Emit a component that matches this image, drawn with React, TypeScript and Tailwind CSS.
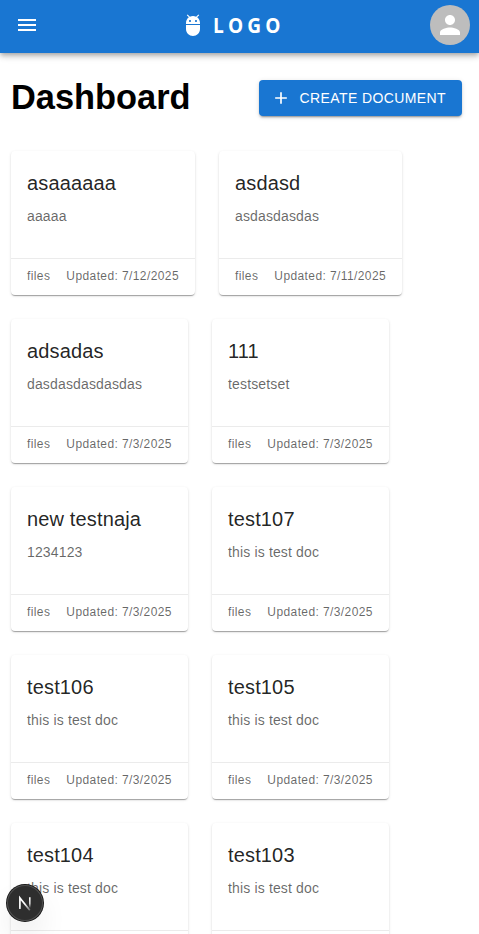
type Doc = { title: string; text: string; date?: string };

const rows: Doc[][] = [
  [
    { title: "asaaaaaa", text: "aaaaa", date: "7/12/2025" },
    { title: "asdasd", text: "asdasdasdas", date: "7/11/2025" },
  ],
  [
    { title: "adsadas", text: "dasdasdasdasdas", date: "7/3/2025" },
    { title: "111", text: "testsetset", date: "7/3/2025" },
  ],
  [
    { title: "new testnaja", text: "1234123", date: "7/3/2025" },
    { title: "test107", text: "this is test doc", date: "7/3/2025" },
  ],
  [
    { title: "test106", text: "this is test doc", date: "7/3/2025" },
    { title: "test105", text: "this is test doc", date: "7/3/2025" },
  ],
  [
    { title: "test104", text: "this is test doc" },
    { title: "test103", text: "this is test doc" },
  ],
];

function Icon({ d, className }: { d: string; className: string }) {
  return (
    <svg viewBox="0 0 24 24" fill="currentColor" className={className}>
      <path d={d} />
    </svg>
  );
}

const menuPath = "M3 18h18v-2H3v2zm0-5h18v-2H3v2zm0-7v2h18V6H3z";
const adbPath =
  "M5 16c0 3.87 3.13 7 7 7s7-3.13 7-7v-4H5v4zM16.12 4.37l2.1-2.1-.82-.83-2.3 2.31C14.16 3.28 13.12 3 12 3s-2.16.28-3.09.75L6.6 1.44l-.82.83 2.1 2.1C6.14 5.64 5 7.68 5 10v1h14v-1c0-2.32-1.14-4.36-2.88-5.63zM9 9c-.55 0-1-.45-1-1s.45-1 1-1 1 .45 1 1-.45 1-1 1zm6 0c-.55 0-1-.45-1-1s.45-1 1-1 1 .45 1 1-.45 1-1 1z";
const personPath =
  "M12 12c2.21 0 4-1.79 4-4s-1.79-4-4-4-4 1.79-4 4 1.79 4 4 4zm0 2c-2.67 0-8 1.34-8 4v2h16v-2c0-2.66-5.33-4-8-4z";
const addPath = "M19 13h-6v6h-2v-6H5v-2h6V5h2v6h6v2z";

function DocCard({ doc }: { doc: Doc }) {
  return (
    <article className="h-36 min-w-[177px] shrink-0 rounded bg-white shadow-[0_2px_1px_-1px_rgba(0,0,0,0.2),0_1px_1px_0_rgba(0,0,0,0.14),0_1px_3px_0_rgba(0,0,0,0.12)]">
      <div className="h-[107px] px-4 pt-4">
        <h2 className="mb-[7px] text-xl leading-8 tracking-[0.0075em] text-black/87">{doc.title}</h2>
        <p className="text-sm leading-5 tracking-[0.01071em] text-black/60">{doc.text}</p>
      </div>
      <footer className="flex h-[37px] gap-4 border-t border-black/8 px-4 pt-[7px] text-xs leading-5 tracking-[0.03333em] text-black/60">
        {doc.date && (
          <>
            <span>files</span>
            <span>Updated: {doc.date}</span>
          </>
        )}
      </footer>
    </article>
  );
}

export default function App() {
  return (
    <div className="h-[934px] overflow-hidden bg-white font-['Liberation_Sans',Arial,sans-serif]">
      <header className="flex h-[53px] items-start bg-[#1976d2] pr-[9px] pl-[15px] text-white shadow-[0_2px_4px_-1px_rgba(0,0,0,0.2),0_4px_5px_0_rgba(0,0,0,0.14),0_1px_10px_0_rgba(0,0,0,0.12)]">
        <button className="mt-[13px]" aria-label="Menu">
          <Icon d={menuPath} className="size-6" />
        </button>
        <div className="mt-[13px] ml-[142px] flex h-6 items-center gap-2">
          <Icon d={adbPath} className="size-6" />
          <span className="origin-left scale-x-[0.93] font-['Open_Sans',sans-serif] text-[20.5px] leading-6 font-bold tracking-[4.5px]">LOGO</span>
        </div>
        <div className="mt-[5px] ml-auto flex size-10 items-center justify-center rounded-full bg-[#bdbdbd]">
          <Icon d={personPath} className="size-[30px]" />
        </div>
      </header>
      <main className="pr-[17px] pl-[11px]">
        <div className="flex h-[98px] items-start justify-between pt-[27px]">
          <h1 className="mt-[-3px] text-[34.4px] leading-10 font-bold text-black">Dashboard</h1>
          <button className="flex h-9 items-center rounded bg-[#1976d2] pr-4 pl-3 text-sm tracking-[0.02857em] text-white shadow-[0_3px_1px_-2px_rgba(0,0,0,0.2),0_2px_2px_0_rgba(0,0,0,0.14),0_1px_5px_0_rgba(0,0,0,0.12)]">
            <Icon d={addPath} className="mr-2 size-5" />
            CREATE DOCUMENT
          </button>
        </div>
        <div className="flex flex-col gap-6">
          {rows.map((row, i) => (
            <div key={i} className="flex gap-6">
              {row.map((doc) => (
                <DocCard key={doc.title} doc={doc} />
              ))}
            </div>
          ))}
        </div>
      </main>
      <div className="fixed top-[885px] left-[7px] flex size-9 items-center justify-center rounded-full bg-[#2e2e2e] shadow-[0_0_0_1px_#171717,inset_0_0_0_1px_#505050,0_16px_32px_-8px_rgba(0,0,0,0.24)]">
        <svg viewBox="0 0 36 36" fill="none" className="size-9">
          <defs>
            <linearGradient id="stem" x1="0" y1="12" x2="0" y2="23" gradientUnits="userSpaceOnUse">
              <stop stopColor="#fff" />
              <stop offset="0.6" stopColor="#fff" stopOpacity="0.8" />
              <stop offset="1" stopColor="#fff" stopOpacity="0" />
            </linearGradient>
            <linearGradient id="diag" x1="19" y1="18" x2="24" y2="26" gradientUnits="userSpaceOnUse">
              <stop stopColor="#fff" />
              <stop offset="1" stopColor="#fff" stopOpacity="0.2" />
            </linearGradient>
          </defs>
          <path d="M12.9 24V13L22.8 25.3" stroke="url(#diag)" strokeWidth="1.7" />
          <path d="M22.8 12.2v10.8" stroke="url(#stem)" strokeWidth="1.6" />
        </svg>
      </div>
    </div>
  );
}
